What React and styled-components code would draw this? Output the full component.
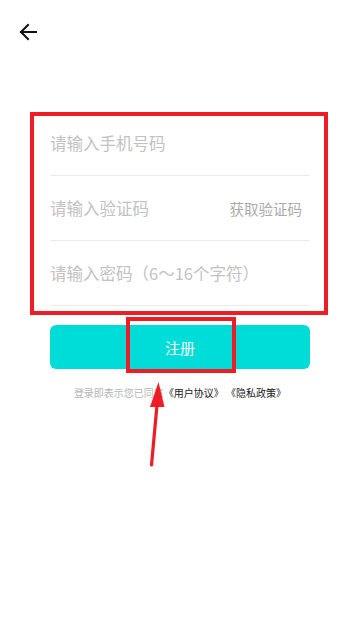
import React from "react"
import styled, { createGlobalStyle } from "styled-components"

const GlobalStyle = createGlobalStyle`
  html, body {
    margin: 0;
    padding: 0;
    background: #ffffff;
  }
  * {
    box-sizing: border-box;
  }
`

//Styled Components
const Page = styled.div`
  position: relative;
  width: 360px;
  height: 620px;
  background: #ffffff;
  font-family: "Noto Sans CJK SC", "Noto Sans", sans-serif;
  overflow: hidden;
`

const Header = styled.div`
  height: 64px;
  display: flex;
  align-items: center;
  padding: 0 0 0 18px;
  button {
    display: flex;
    align-items: center;
    justify-content: center;
    width: 20px;
    height: 20px;
    padding: 0;
    border: none;
    background: transparent;
    cursor: pointer;
  }
`

const Form = styled.div`
  margin: 47px 0 0 0;
  padding: 0 50px;
`

const Row = styled.div`
  height: 65px;
  display: flex;
  align-items: center;
  justify-content: space-between;
  border-bottom: 1px solid #ebebeb;
  input {
    flex: 1;
    min-width: 0;
    border: none;
    outline: none;
    padding: 0;
    margin: 0;
    font-family: "Noto Sans CJK SC", sans-serif;
    font-size: 16.5px;
    color: #333;
    background: transparent;
    &::placeholder {
      color: #c2c2c2;
    }
  }
  .code {
    font-size: 14.5px;
    color: #ababab;
    white-space: nowrap;
    margin: 0 8px 0 0;
  }
`

const Submit = styled.button`
  display: block;
  width: 260px;
  height: 44px;
  margin: 19px 0 0 50px;
  border: none;
  border-radius: 6px;
  background: #00dcd8;
  color: #ffffff;
  font-family: "Noto Sans CJK SC", sans-serif;
  font-size: 15px;
  cursor: pointer;
`

const Agreement = styled.p`
  margin: 17px 0 0 0;
  padding: 0;
  text-align: center;
  font-size: 10px;
  line-height: 14px;
  color: #b5b5b5;
  white-space: pre;
  span {
    color: #1a1a1a;
  }
`

const Highlight = styled.div`
  position: absolute;
  left: ${p => p.x}px;
  top: ${p => p.y}px;
  width: ${p => p.w}px;
  height: ${p => p.h}px;
  border: 4px solid #ee1c25;
  pointer-events: none;
`

const Pointer = styled.svg`
  position: absolute;
  left: 140px;
  top: 375px;
  pointer-events: none;
`

const App = () => {
  return (
    <Page>
      <GlobalStyle />
      <Header>
        <button aria-label="back">
          <svg width="18" height="18" viewBox="0 0 18 18" fill="none">
            <path
              d="M17 9H2M9 2L2 9l7 7"
              stroke="#111"
              strokeWidth="2"
              strokeLinecap="square"
            />
          </svg>
        </button>
      </Header>
      <Form>
        <Row>
          <input placeholder="请输入手机号码" />
        </Row>
        <Row>
          <input placeholder="请输入验证码" />
          <span className="code">获取验证码</span>
        </Row>
        <Row>
          <input type="password" placeholder="请输入密码（6～16个字符）" />
        </Row>
      </Form>
      <Submit>注册</Submit>
      <Agreement>
        登录即表示您已同意<span>《用户协议》 《隐私政策》</span>
      </Agreement>

      <Highlight x={30} y={112} w={298} h={203} />
      <Highlight x={126} y={317} w={110} h={56} />
      <Pointer width="30" height="95" viewBox="140 375 30 95">
        <polygon points="158.5,382 150,407 164.5,407" fill="#ee1c25" />
        <line
          x1="157"
          y1="405"
          x2="151.5"
          y2="465"
          stroke="#ee1c25"
          strokeWidth="3.2"
          strokeLinecap="round"
        />
      </Pointer>
    </Page>
  )
}

export default App
